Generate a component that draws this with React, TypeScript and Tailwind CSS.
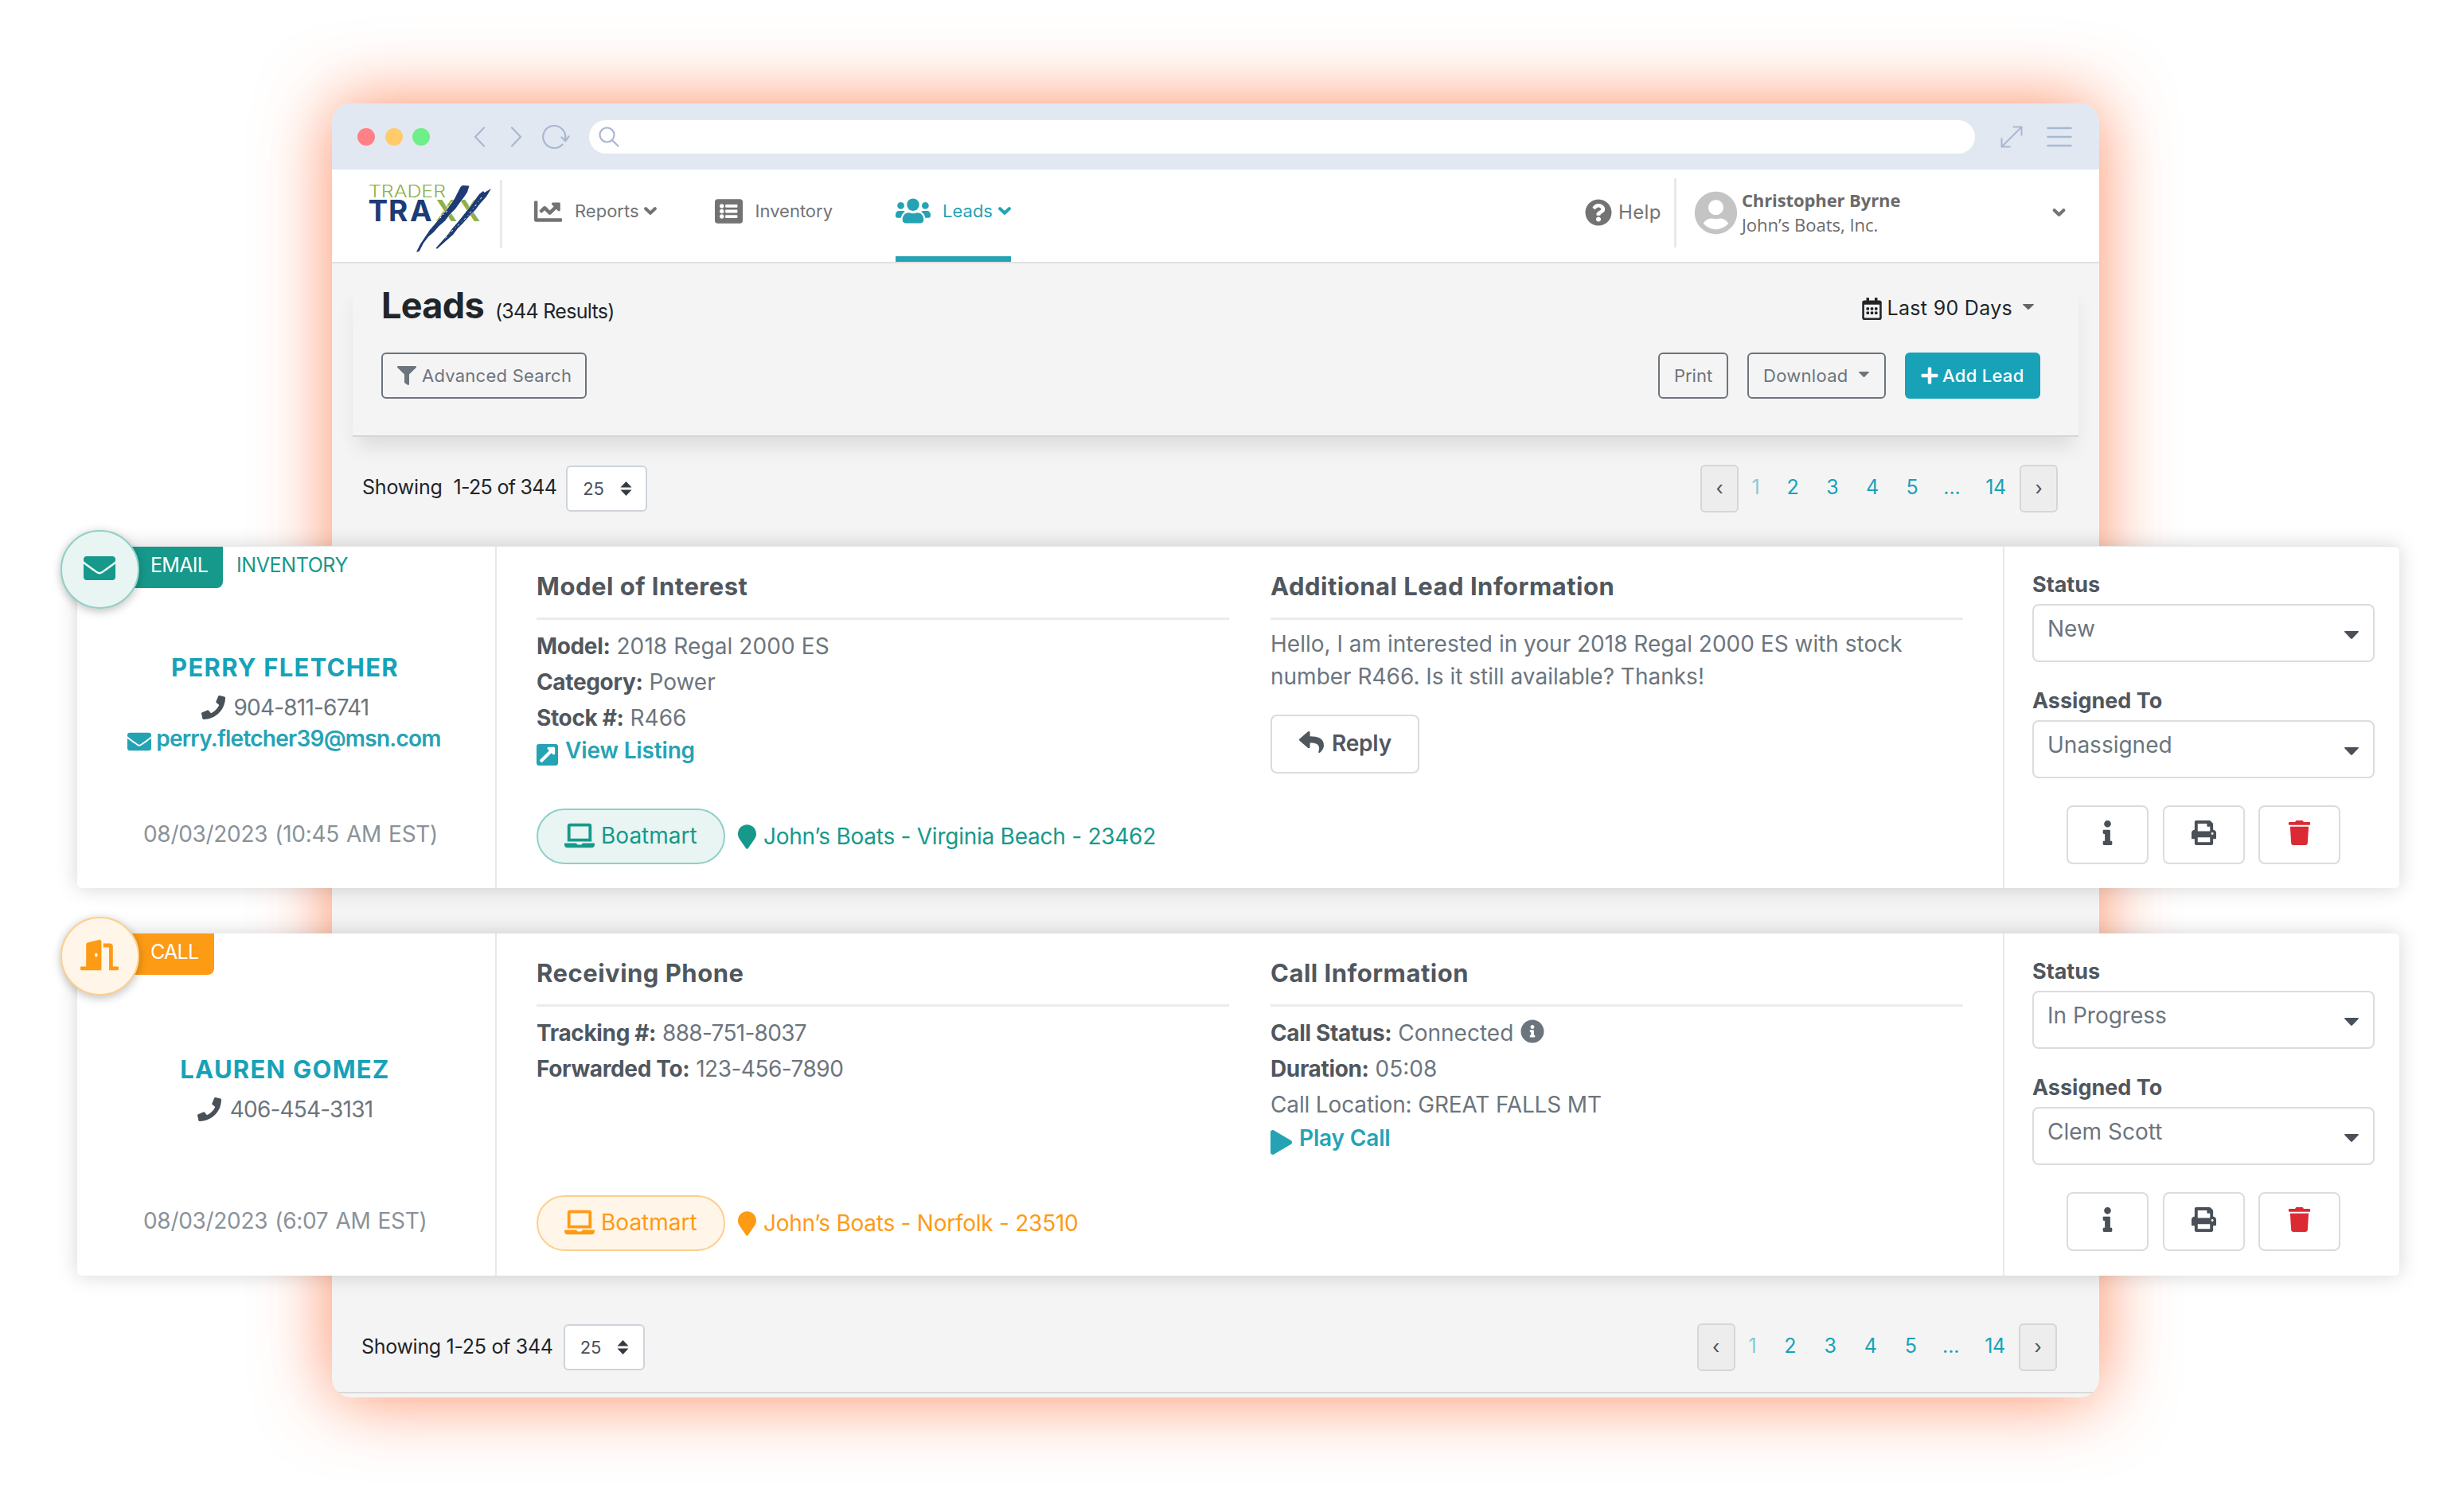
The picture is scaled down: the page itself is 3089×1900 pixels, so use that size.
import type { ReactNode } from 'react'
import {
  FaChartLine, FaDoorOpen, FaEnvelope, FaExternalLinkSquareAlt, FaFilter, FaInfo, FaInfoCircle, FaLaptop, FaListAlt,
  FaMapMarker, FaPhone, FaPlay, FaPlus, FaPrint, FaQuestionCircle, FaRegCalendarAlt, FaReply, FaTrash, FaUserCircle, FaUsers,
} from 'react-icons/fa'

function Chevron({ className }: { className: string }) {
  return (
    <svg className={className} viewBox="0 0 16 10" fill="none" stroke="currentColor" strokeWidth="4" strokeLinecap="round" strokeLinejoin="round">
      <path d="M2.2 2.2 8 7.8l5.8-5.6" />
    </svg>
  )
}

function Caret({ className }: { className: string }) {
  return (
    <svg className={className} viewBox="0 0 14 8" preserveAspectRatio="none" fill="currentColor">
      <path d="M.6 0h12.8c.5 0 .8.6.4 1L7.7 7.6a1 1 0 0 1-1.4 0L.2 1C-.2.6.1 0 .6 0z" />
    </svg>
  )
}

function Logo() {
  return (
    <svg className="mt-[9px] h-[90px] w-[160px] shrink-0 overflow-visible" viewBox="0 -8 160 90">
      <text x="3" y="17.500" fontSize="21" fontWeight="300" fill="#8fb04a" textLength="97" lengthAdjust="spacingAndGlyphs">TRADER</text>
      <text y="48" fontSize="37" fontWeight="700">
        <tspan x="2.5 28 55" fill="#1d3b74">TRA</tspan>
        <tspan x="87 116" fill="#8fb04a">XX</tspan>
      </text>
      {/* brush strokes, wide at the top and worn to a point */}
      <g fill="#1d3b74" stroke="#fff" strokeWidth="1" paintOrder="stroke">
        <path d="M118.500 5l2.500-2 8.500.5-2.500 8-4 6-6 8-5 7-7 7-6 8-8 7-6 7-7 6-6 8-5.500 10.500-3.500.8 5-10 6-9 6-9 7-8 7-9 8-9 9-13z" />
        <path d="M142 14l5-4 1.500 2 8.500-5-6 10-8 9-6 8-8 8-7 8-7 7-6 8-8 7-12 10.800-1.500-1 8-9 7-8 6-8 7-8 8-10 7-9z" />
      </g>
      <g fill="none" stroke="#fff" strokeWidth="1">
        <path strokeDasharray="3 3 1 4 2 5" d="M102 35 86 51 70 71" />
        <path strokeDasharray="2 4 3 5" d="M107 24 92 43" />
        <path strokeDasharray="3 3 1 4" d="M145 18l-18 24-19 18-10 11" />
      </g>
    </svg>
  )
}

function BrowserBar() {
  return (
    <div className="flex h-[83px] shrink-0 items-center bg-[#e2e8f2] pl-8 text-[#a9b7d1]">
      <div className="flex gap-[12.5px]">
        <span className="size-[22px] rounded-full bg-[#ff8086]" />
        <span className="size-[22px] rounded-full bg-[#ffcb6b]" />
        <span className="size-[22px] rounded-full bg-[#6eef87]" />
      </div>
      <svg className="ml-[54px] h-[30px] w-[124px]" viewBox="0 0 124 30" fill="none" stroke="currentColor" strokeWidth="2.2" strokeLinecap="round" strokeLinejoin="round">
        <path d="M14 3.500 3 15 14 26.500M49 3.500 60 15 49 26.500" />
        <path d="M112.500 24.500A14 14 0 1 1 116 17.500l.5 2.500M111.500 15.500l4.800 4.800 4.200-6" />
      </svg>
      <div className="ml-[22px] flex h-[42px] w-[1741px] items-center rounded-full bg-white pl-3">
        <svg className="size-[26px]" viewBox="0 0 26 26" fill="none" stroke="currentColor" strokeWidth="2.200" strokeLinecap="round">
          <circle cx="10.500" cy="10.500" r="9" />
          <path d="m17.500 17.500 7 7" />
        </svg>
      </div>
      <svg className="ml-8 h-[28px] w-[28px]" viewBox="0 0 28 28" fill="none" stroke="currentColor" strokeWidth="2">
        <path d="M1.500 26.500l25-25M15.500 1.500h11v11M1.500 15.500v11h11" />
      </svg>
      <svg className="ml-[30px] h-[26px] w-[32px]" viewBox="0 0 32 26" stroke="currentColor" strokeWidth="2.500" strokeLinecap="round">
        <path d="M1.500 2h29M1.500 13h29M1.500 24h29" />
      </svg>
    </div>
  )
}

function NavBar() {
  return (
    <nav className="flex h-[118px] shrink-0 border-b-2 border-[#e1e1e1] bg-white pl-[43px] text-[22px] text-[#737373]">
      <Logo />
      <div className="mt-[13px] ml-2 h-[86px] w-[3px] bg-[#e9e9e9]" />
      <a className="ml-10 flex items-center pb-[12px]">
        <FaChartLine className="size-[35px]" />
        <span className="ml-4">Reports</span>
        <Chevron className="ml-[6px] h-[10px] w-[16px]" />
      </a>
      <a className="ml-[73px] flex items-center pb-[12px]">
        <FaListAlt className="size-[35px]" />
        <span className="ml-4">Inventory</span>
      </a>
      <a className="ml-[79px] flex items-center border-b-[7px] border-[#25a3b5] pb-[5px] text-[#25a3b5]">
        <FaUsers className="size-[44px]" />
        <span className="ml-[15px]">Leads</span>
        <Chevron className="ml-[7px] h-[10px] w-[16px]" />
      </a>
      <a className="ml-[721px] flex items-center pb-[9px] text-2xl tracking-[0.4px]">
        <FaQuestionCircle className="size-[34px]" />
        <span className="ml-[8px]">Help</span>
      </a>
      <div className="mt-[11px] ml-[16px] h-[87px] w-[3px] bg-[#e9e9e9]" />
      <div className="ml-[22px] flex w-[467px] items-center pb-[8px] font-['Open_Sans',sans-serif]">
        <FaUserCircle className="size-[55px] text-[#c4c4c4]" />
        <div className="ml-[5px] leading-[31px] text-[#6a6a6a]">
          <div className="font-bold tracking-[-0.1px]">Christopher Byrne</div>
          <div className="font-medium">John’s Boats, Inc.</div>
        </div>
        <Chevron className="ml-auto h-[10px] w-[17px]" />
      </div>
    </nav>
  )
}

function HeaderPanel() {
  return (
    <section className="mx-[26px] mt-6 h-[194px] shrink-0 border-b-2 border-[#d6d6d6] pr-[48px] pl-[36px] shadow-[0_18px_24px_-6px_rgba(0,0,0,0.10)]">
      <div className="flex h-[57px] items-baseline text-[#212529]">
        <h1 className="text-[45px] leading-[57px] font-bold tracking-[-0.7px]">Leads</h1>
        <span className="ml-[14px] text-[25px] tracking-[-0.7px]">(344 Results)</span>
        <div className="mr-2 ml-auto flex items-center self-center pt-[8px] text-[25px] tracking-[0.3px]">
          <FaRegCalendarAlt className="h-[28px] w-[25px]" />
          <span className="ml-[7px]">Last 90 Days</span>
          <Caret className="mb-1 ml-[13px] h-[7px] w-[14px] text-[#666]" />
        </div>
      </div>
      <div className="mt-[31px] flex h-[58px] text-[22px] text-[#6c757d]">
        <button className="flex w-[258px] items-center rounded-md border-2 border-[#6c757d] pl-[18px] tracking-[0.25px]">
          <FaFilter className="size-[24px]" />
          <span className="ml-[7px]">Advanced Search</span>
        </button>
        <button className="ml-auto w-[88px] rounded-md border-2 border-[#6c757d]">Print</button>
        <button className="ml-6 flex w-[174px] items-center rounded-md border-2 border-[#6c757d] pl-[18px] tracking-[0.3px]">
          Download
          <Caret className="mb-1 ml-[13px] h-[7px] w-[13px]" />
        </button>
        <button className="ml-6 flex w-[170px] items-center rounded-md bg-[#17a2b8] pl-[19px] font-medium tracking-[0.3px] text-white">
          <FaPlus className="size-[24px]" />
          <span className="ml-1">Add Lead</span>
        </button>
      </div>
    </section>
  )
}

function PerPage() {
  return (
    <div className="flex h-[58px] w-[102px] items-center rounded-md border-2 border-[#ced4da] bg-white pl-[19px] text-[22px] text-[#495057]">
      25
      <svg className="ml-[20px] h-[18px] w-[15px]" viewBox="0 0 14 18" fill="#343a40">
        <path d="M7 0l7 7.500H0zM7 18l7-7.500H0z" />
      </svg>
    </div>
  )
}

function Pager({ firstWidth, cellWidth }: { firstWidth: string; cellWidth: string }) {
  const arrow = 'flex h-[60px] w-[48px] items-center justify-center rounded-md border-2 border-[#d6d6d6] bg-[#ededed] text-[24px] text-[#495057]'
  return (
    <div className="ml-auto flex items-center text-center text-[25px] text-[#17a2b8]">
      <div className={arrow}>‹</div>
      <div className={`${firstWidth} pb-[3px] opacity-50`}>1</div>
      {['2', '3', '4', '5', '...'].map((p) => (
        <div key={p} className={`${cellWidth} pb-[3px]`}>{p}</div>
      ))}
      <div className="w-[60px] pb-[3px] tracking-[-0.4px]">14</div>
      <div className={arrow}>›</div>
    </div>
  )
}

function AppWindow() {
  return (
    <div className="ml-[417px] flex h-[1626px] w-[2220px] flex-col overflow-hidden rounded-3xl bg-[#f4f4f4] shadow-[0_0_90px_rgba(255,120,70,0.85)]">
      <BrowserBar />
      <NavBar />
      <HeaderPanel />
      <div className="mt-[35px] flex h-[60px] shrink-0 items-center pr-[52px] pl-[38px] text-[25px] text-[#212529]">
        <span className="pb-[2px] tracking-[-0.2px]">Showing</span>
        <span className="ml-[14px] pb-[2px] tracking-[-0.7px]">1-25 of 344</span>
        <div className="ml-[12px]"><PerPage /></div>
        <Pager firstWidth="w-[43px]" cellWidth="w-[50px]" />
      </div>
      <div className="mt-auto mb-[26px] flex h-[60px] shrink-0 items-center pr-[53px] pl-[37px] text-[25px] text-[#212529]">
        <span className="pb-px tracking-[-0.3px]">Showing 1-25 of 344</span>
        <div className="ml-[13px]"><PerPage /></div>
        <Pager firstWidth="w-[44px]" cellWidth="w-[50.5px]" />
      </div>
      <div className="h-[7px] shrink-0 border-t-2 border-[#d9d9d9]" />
    </div>
  )
}

type Tone = {
  text: string
  badge: string
  soft: string
}

const green: Tone = { text: 'text-[#16998a]', badge: 'bg-[#16998a]', soft: 'border-[#8fd0c8] bg-[#e8f5f3]' }
const orange: Tone = { text: 'text-[#fd9b14]', badge: 'bg-[#fd9b14]', soft: 'border-[#fdcf8e] bg-[#fff5e8]' }

function Select({ label, value }: { label: string; value: string }) {
  return (
    <div>
      <div className="pt-px text-[27px] leading-[39px] font-bold text-[#50575e]">{label}</div>
      <div className="mt-[5px] flex h-[73px] items-center rounded-lg border-[2.5px] border-[#dcdcdc] pr-[18px] pl-[17px]">
        <span className="pb-[11px]">{value}</span>
        <Caret className="mt-1 ml-auto h-[10px] w-[18px] text-[#495057]" />
      </div>
    </div>
  )
}

function IconButton({ children }: { children: ReactNode }) {
  return (
    <button className="flex h-[74px] w-[103px] items-center justify-center rounded-lg border-[2.5px] border-[#dcdcdc] pb-[5px] text-[#495057]">
      {children}
    </button>
  )
}

function Column({ title, children }: { title: string; children: ReactNode }) {
  return (
    <div className="w-[870px]">
      <h2 className="h-[62px] border-b-[3px] border-[#ebebeb] text-[31px] leading-[40px] font-bold tracking-[0.5px] text-[#50575e]">
        {title}
      </h2>
      {children}
    </div>
  )
}

function Field({ label, children }: { label: string; children: ReactNode }) {
  return (
    <div className="flex h-[45.3px] items-center gap-2">
      <span className="font-bold tracking-[-0.35px] text-[#50575e]">{label}</span>
      {children}
    </div>
  )
}

type LeadProps = {
  tone: Tone
  icon: ReactNode
  badge: string
  badgeWidth: string
  tag?: string
  name: string
  phone: string
  email?: string
  date: string
  title: string
  details: ReactNode
  location: string
  infoTitle: string
  info: ReactNode
  status: string
  assignee: string
  className?: string
}

function LeadCard(p: LeadProps) {
  return (
    <article className={`relative flex h-[430px] rounded-md bg-white text-[28px] text-[#6c757d] shadow-[0_0_26px_rgba(0,0,0,0.17)] ${p.className ?? ''}`}>
      <div className={`absolute -top-[21px] -left-[21px] flex size-[99px] items-center justify-center rounded-full border-[2.5px] pr-px shadow-[0_3px_12px_rgba(0,0,0,0.25)] ${p.tone.soft} ${p.tone.text}`}>
        {p.icon}
      </div>

      {/* Contact */}
      <div className="flex w-[527px] flex-col border-r-2 border-[#e8e8e8]">
        <div className={`flex h-[52px] text-[25px] leading-[47px] ${p.tone.text}`}>
          <div className={`${p.badgeWidth} ${p.tone.badge} rounded-br-lg pl-[92px] tracking-[-0.7px] text-white`}>{p.badge}</div>
          <span className="ml-[17px] tracking-[-0.4px]">{p.tag}</span>
        </div>
        <div className="flex h-[288px] flex-col items-center justify-center pr-[3px]">
          <div className="text-[31px] leading-[40px] font-bold tracking-[1.25px] text-[#17a2b8]">{p.name}</div>
          <div className="mt-[10px] flex h-10 items-center">
            <FaPhone className="size-[30px] text-[#495057]" />
            <span className="ml-[11px] tracking-[-0.8px]">{p.phone}</span>
          </div>
          {p.email && (
            <div className="-mt-px flex h-10 items-center pr-[2px] font-semibold tracking-[-0.75px] text-[#25a3b5]">
              <FaEnvelope className="mt-2 size-[30px]" />
              <span className="ml-[6px]">{p.email}</span>
            </div>
          )}
        </div>
        <div className="pl-[83px] leading-[42px] tracking-[-0.3px] text-[#8a9299] [word-spacing:1.500px]">{p.date}</div>
      </div>

      {/* Details */}
      <div className="flex flex-1 gap-[52px] pt-[30px] pl-[50px]">
        <Column title={p.title}>
          <div className="h-[237px] pt-[10px]">{p.details}</div>
          <div className={`flex h-[70px] items-center ${p.tone.text}`}>
            <div className={`flex h-full w-[237px] items-center rounded-full border-[2.5px] pb-[2px] pl-[33px] ${p.tone.soft}`}>
              <FaLaptop className="size-[38px]" />
              <span className="ml-2">Boatmart</span>
            </div>
            <FaMapMarker className="ml-[16px] h-[31px] w-[23px]" />
            <span className="ml-[9px] tracking-[-0.25px]">{p.location}</span>
          </div>
        </Column>
        <Column title={p.infoTitle}>{p.info}</Column>
      </div>

      {/* Status */}
      <div className="w-[498px] border-l-2 border-[#e8e8e8] pt-[27px] pl-[35px]">
        <div className="flex w-[430px] flex-col gap-7">
          <Select label="Status" value={p.status} />
          <Select label="Assigned To" value={p.assignee} />
        </div>
        <div className="mt-[34px] flex w-[430px] justify-center gap-[17.5px]">
          <IconButton><FaInfo className="size-[31px]" /></IconButton>
          <IconButton><FaPrint className="size-[31px]" /></IconButton>
          <IconButton><FaTrash className="size-[31px] text-[#dc2a35]" /></IconButton>
        </div>
      </div>
    </article>
  )
}

export default function App() {
  return (
    <main className="relative h-[1900px] w-[3089px] overflow-hidden bg-white pt-[130px] font-['Inter',sans-serif]">
      <AppWindow />

      {/* Lead cards float over the window and past both of its sides */}
      <div className="absolute top-[686px] left-[97px] flex w-[2917px] flex-col gap-[57px]">
        <LeadCard
          className="border-t border-[#e6e6e6]"
          tone={green}
          icon={<FaEnvelope className="mb-1 size-[40px]" />}
          badge="EMAIL"
          badgeWidth="w-[183px]"
          tag="INVENTORY"
          name="PERRY FLETCHER"
          phone="904-811-6741"
          email="perry.fletcher39@msn.com"
          date="08/03/2023 (10:45 AM EST)"
          title="Model of Interest"
          details={
            <>
              <Field label="Model:"><span className="tracking-[0.1px]">2018 Regal 2000 ES</span></Field>
              <Field label="Category:">Power</Field>
              <Field label="Stock #:">R466</Field>
              <a className="flex h-[36px] items-center font-semibold tracking-[-0.15px] text-[#25a3b5]">
                <FaExternalLinkSquareAlt className="mt-3 h-[31px] w-[27px]" />
                <span className="ml-[9px]">View Listing</span>
              </a>
            </>
          }
          location="John’s Boats - Virginia Beach - 23462"
          infoTitle="Additional Lead Information"
          info={
            <>
              <p className="mt-[10px] leading-[41px]">
                Hello, I am interested in your 2018 Regal 2000 ES with stock number R466. Is it still available? Thanks!
              </p>
              <button className="mt-[27px] flex h-[74px] w-[187px] items-center rounded-lg border-[2.5px] border-[#dcdcdc] pb-[2px] pl-[34px] font-semibold tracking-[-0.2px] text-[#50575e]">
                <FaReply className="mb-1 size-[31px]" />
                <span className="ml-[10px]">Reply</span>
              </button>
            </>
          }
          status="New"
          assignee="Unassigned"
        />
        <LeadCard
          tone={orange}
          icon={<FaDoorOpen className="mb-1 size-[48px]" />}
          badge="CALL"
          badgeWidth="w-[172px]"
          name="LAUREN GOMEZ"
          phone="406-454-3131"
          date="08/03/2023 (6:07 AM EST)"
          title="Receiving Phone"
          details={
            <>
              <Field label="Tracking #:"><span className="tracking-[-0.7px]">888-751-8037</span></Field>
              <Field label="Forwarded To:"><span className="tracking-[-0.5px]">123-456-7890</span></Field>
            </>
          }
          location="John’s Boats - Norfolk - 23510"
          infoTitle="Call Information"
          info={
            <div className="pt-[10px]">
              <Field label="Call Status:">
                Connected
                <FaInfoCircle className="mb-1 ml-px size-[30px]" />
              </Field>
              <Field label="Duration:">05:08</Field>
              <div className="h-[45.3px] leading-[45px] tracking-[-0.15px]">Call Location: GREAT FALLS MT</div>
              <a className="flex h-[38px] items-center font-semibold tracking-[-0.15px] text-[#25a3b5]">
                <FaPlay className="mt-[11px] h-[31px] w-[27px]" />
                <span className="ml-[9px]">Play Call</span>
              </a>
            </div>
          }
          status="In Progress"
          assignee="Clem Scott"
        />
      </div>
    </main>
  )
}
